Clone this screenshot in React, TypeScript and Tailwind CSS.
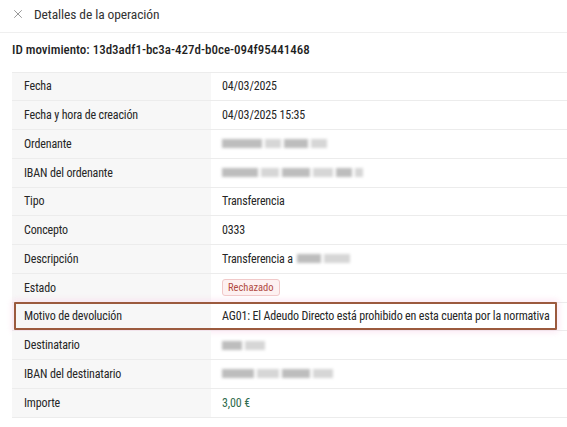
import { X } from "lucide-react";

type Row = {
  label: string;
  value?: string;
  blur?: number[];
  prefix?: string;
  badge?: boolean;
  money?: boolean;
  highlight?: boolean;
};

const rows: Row[] = [
  { label: "Fecha", value: "04/03/2025" },
  { label: "Fecha y hora de creación", value: "04/03/2025 15:35" },
  { label: "Ordenante", blur: [40, 16, 24, 16] },
  { label: "IBAN del ordenante", blur: [36, 18, 28, 20, 16, 8] },
  { label: "Tipo", value: "Transferencia" },
  { label: "Concepto", value: "0333" },
  { label: "Descripción", prefix: "Transferencia a", blur: [24, 26] },
  { label: "Estado", badge: true },
  {
    label: "Motivo de devolución",
    value: "AG01: El Adeudo Directo está prohibido en esta cuenta por la normativa",
    highlight: true,
  },
  { label: "Destinatario", blur: [20, 20] },
  { label: "IBAN del destinatario", blur: [32, 22, 28, 20] },
  { label: "Importe", value: "3,00 €", money: true },
];

function Blurred({ widths }: { widths: number[] }) {
  return (
    <span className="inline-flex items-center gap-[3px] blur-[1.8px]">
      {widths.map((w, i) => (
        <span
          key={i}
          className={i % 2 === 0 ? "h-[9px] bg-[#bdbdbd]" : "h-[9px] bg-[#d6d6d6]"}
          style={{ width: w }}
        />
      ))}
    </span>
  );
}

function DetailRow({ row }: { row: Row }) {
  return (
    <div className="relative grid h-[28.75px] grid-cols-[199px_1fr] border-b border-[#ececec]">
      <div className="flex items-center bg-[#f7f7f7] pl-3 text-[#262626]">{row.label}</div>
      <div className="flex items-center gap-1 whitespace-nowrap pl-[11px] text-[#262626]">
        {row.value && (
          <span className={row.money ? "text-[#2f6b4e]" : ""}>{row.value}</span>
        )}
        {row.prefix && <span>{row.prefix}</span>}
        {row.blur && <Blurred widths={row.blur} />}
        {row.badge && (
          <span className="rounded-[3px] border border-[#f1c9c9] bg-[#fdf1f1] px-[5px] py-[1px] text-[10.5px] leading-[13px] tracking-normal text-[#b14a42]">
            Rechazado
          </span>
        )}
      </div>
      {row.highlight && (
        <div className="pointer-events-none absolute -top-[1px] left-[2px] right-[10px] bottom-0 rounded-[1px] border-2 border-[#9b5a3e] shadow-[0_0_6px_2px_rgba(250,215,235,0.6)]" />
      )}
    </div>
  );
}

export default function App() {
  return (
    <div
      className="h-[427px] w-[567px] overflow-hidden bg-white text-[12px] tracking-[-0.15px]"
      style={{ fontFamily: "'Liberation Sans Narrow', 'Roboto Condensed', Roboto, sans-serif" }}
    >
      <div className="flex h-[33px] items-start gap-[9px] border-b border-[#efefef] pl-[11px] pt-[4px]">
        <X className="mt-[3px] h-[14px] w-[14px] text-[#8a8a8a]" strokeWidth={1.5} />
        <span className="text-[13.5px] tracking-[-0.1px] text-[#333]">Detalles de la operación</span>
      </div>
      <div className="px-3 pt-[7px] pb-[12px] text-[13px] font-medium tracking-normal text-[#1f1f1f]">
        ID movimiento: 13d3adf1-bc3a-427d-b0ce-094f95441468
      </div>
      <div className="ml-3 border-t border-[#ececec]">
        {rows.map((r) => (
          <DetailRow key={r.label} row={r} />
        ))}
      </div>
    </div>
  );
}
